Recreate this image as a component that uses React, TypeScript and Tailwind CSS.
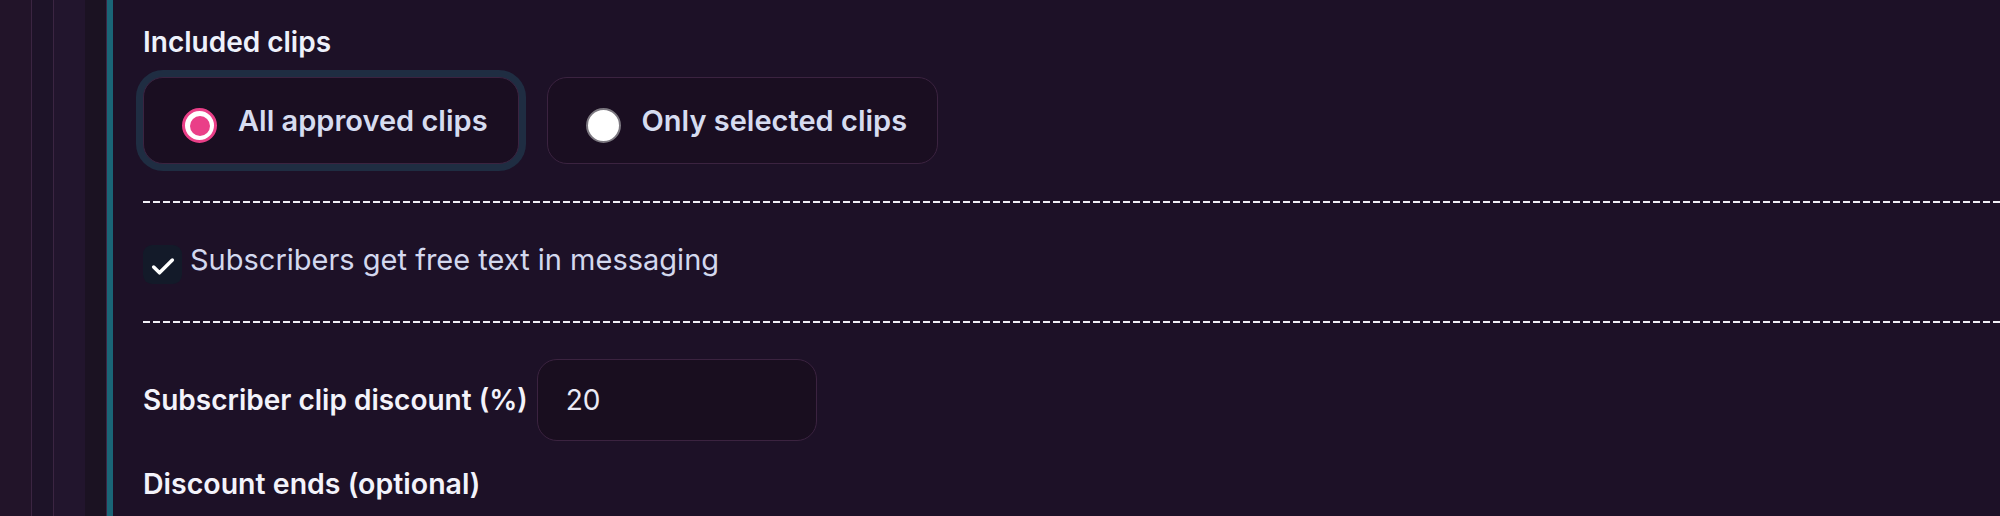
import * as React from "react"

type ClipScope = "all" | "selected"

const scopeOptions: { id: ClipScope; label: string }[] = [
  { id: "all", label: "All approved clips" },
  { id: "selected", label: "Only selected clips" },
]

function RadioDot({ checked }: { checked: boolean }) {
  if (checked) {
    return (
      <span className="mt-[10px] flex h-[35px] w-[35px] shrink-0 items-center justify-center rounded-full border-[3px] border-[#ea3f88] bg-white">
        <span className="h-[20px] w-[20px] rounded-full bg-[#ea3f88]" />
      </span>
    )
  }
  return <span className="mt-[10px] h-[35px] w-[35px] shrink-0 rounded-full border-2 border-[#7c7880] bg-white" />
}

function Dashed() {
  return <div className="h-[2px] w-full bg-[image:repeating-linear-gradient(90deg,#f2f0f7_0_7px,transparent_7px_10px)]" />
}

export default function App() {
  const [scope, setScope] = React.useState<ClipScope>("all")
  const [freeText, setFreeText] = React.useState(true)
  const [discount, setDiscount] = React.useState("20")

  return (
    <div className="flex h-[516px] w-full overflow-hidden bg-[#1d1127] font-['Inter',sans-serif]">
      {/* side rails */}
      <div className="w-[31px] shrink-0 bg-[#221429]" />
      <div className="w-px shrink-0 bg-[#3b2542]" />
      <div className="w-[21px] shrink-0 bg-[#1d1328]" />
      <div className="w-px shrink-0 bg-[#3b2542]" />
      <div className="w-[31px] shrink-0 bg-[#22152d]" />
      <div className="w-[21px] shrink-0 bg-[#1b1222]" />
      <div className="w-px shrink-0 bg-[#3b2542]" />

      <main className="flex min-w-0 flex-1 flex-col border-l-[6px] border-[#1a6577] pl-[30px] pt-[24px]">
        <h3 className="text-[28px] font-semibold leading-[36px] text-[#eef1fb]">Included clips</h3>

        <div className="mt-[17px] flex gap-[28px]">
          {scopeOptions.map((opt) => {
            const active = scope === opt.id
            return (
              <button
                key={opt.id}
                onClick={() => setScope(opt.id)}
                className={
                  "flex h-[87px] items-center gap-[21px] rounded-[20px] border border-[#3b2340] bg-[#1a0e21] pl-[38px] pr-[30px] " +
                  (active ? "shadow-[0_0_0_7px_#1f2d42]" : "")
                }
              >
                <RadioDot checked={active} />
                <span className="text-[29px] font-semibold leading-[36px] text-[#d6dcf0]">{opt.label}</span>
              </button>
            )
          })}
        </div>

        <div className="mt-[37px]">
          <Dashed />
        </div>

        <label className="mt-[39px] flex cursor-pointer items-start gap-[8px]" onClick={() => setFreeText(!freeText)}>
          <span className="mt-[3px] flex h-[39px] w-[39px] shrink-0 items-center justify-center rounded-[9px] bg-[#131a29]">
            {freeText && (
              <svg width="28" height="28" viewBox="0 0 24 24" fill="none" stroke="white" strokeWidth="3" strokeLinecap="round" strokeLinejoin="round" className="mt-[4px]">
                <path d="M20 6 9 17l-5-5" />
              </svg>
            )}
          </span>
          <span className="text-[29px] leading-[36px] text-[#d3d8ee]">Subscribers get free text in messaging</span>
        </label>

        <div className="mt-[37px]">
          <Dashed />
        </div>

        <div className="mt-[36px] flex items-center gap-[9px]">
          <span className="text-[28px] font-semibold leading-[36px] text-[#f3f3fb]">Subscriber clip discount (%)</span>
          <input
            value={discount}
            onChange={(e) => setDiscount(e.target.value)}
            className="h-[82px] w-[280px] rounded-[20px] border border-[#3b2340] bg-[#190e1f] pl-[28px] text-[28px] text-[#eceaf5] outline-none"
          />
        </div>

        <div className="mt-[25px] text-[28.5px] font-semibold leading-[36px] text-[#f3f3fb]">Discount ends (optional)</div>
      </main>
    </div>
  )
}
